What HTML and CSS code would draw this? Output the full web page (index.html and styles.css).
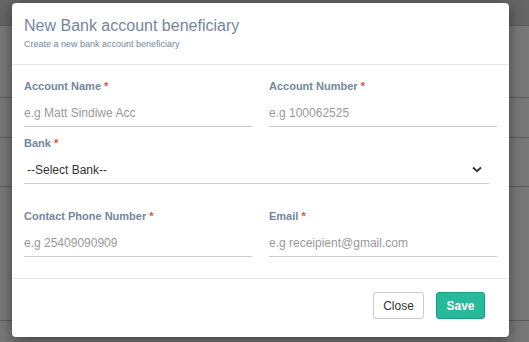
FILE: index.html
```html
<!doctype html>
<html lang="en">
  <head>
    <meta charset="UTF-8" />
    <meta name="viewport" content="width=device-width, initial-scale=1.0" />
    <title>New Bank account beneficiary</title>
    <link rel="stylesheet" href="styles.css">
  </head>
  <body>
    <div class="page">
      <div class="page-row row-top"></div>
      <div class="page-row row-a"></div>
      <div class="page-row row-b"></div>
      <div class="page-row row-c"></div>
      <div class="page-row row-d"></div>
      <div class="page-row row-e"></div>
    </div>

    <div class="modal">
      <div class="modal-header">
        <h4 class="modal-title">New Bank account beneficiary</h4>
        <small class="modal-sub">Create a new bank account beneficiary</small>
      </div>

      <form class="modal-body">
        <div class="form-group">
          <label for="acc_name">Account Name <span class="req">*</span></label>
          <input type="text" id="acc_name" placeholder="e.g Matt Sindiwe Acc" />
        </div>
        <div class="form-group">
          <label for="acc_number">Account Number <span class="req">*</span></label>
          <input type="text" id="acc_number" placeholder="e.g 100062525" />
        </div>

        <div class="form-group wide">
          <label for="bank">Bank <span class="req">*</span></label>
          <div class="select">
            <span>--Select Bank--</span>
            <svg width="10" height="7" viewBox="0 0 10 7">
              <path d="M1 1.5 L5 5.2 L9 1.5" fill="none" stroke="#333" stroke-width="1.8" />
            </svg>
          </div>
        </div>

        <div class="form-group">
          <label for="phone">Contact Phone Number <span class="req">*</span></label>
          <input type="text" id="phone" placeholder="e.g 25409090909" />
        </div>
        <div class="form-group">
          <label for="email">Email <span class="req">*</span></label>
          <input type="text" id="email" placeholder="e.g receipient@gmail.com" />
        </div>
      </form>

      <div class="modal-footer">
        <button type="button" class="btn btn-default">Close</button>
        <button type="button" class="btn btn-success">Save</button>
      </div>
    </div>
  </body>
</html>
```

FILE: styles.css
```css
body {
  margin: 0;
  font-family: "Liberation Sans", Arial, sans-serif;
  background-color: #787878;
  overflow: hidden;
}
.page {
  height: 342px;
}
.page-row {
  border-bottom: 1px solid #5c5c5c;
  box-sizing: border-box;
}
.row-top {
  height: 26px;
  background-color: #656565;
}
.row-a {
  height: 72px;
}
.row-b {
  height: 40px;
}
.row-c {
  height: 49px;
}
.row-d {
  height: 134px;
}
.row-e {
  border-bottom: none;
}

.modal {
  position: absolute;
  left: 12px;
  top: 3px;
  width: 497px;
  height: 334px;
  background: #fff;
  border-radius: 4px;
  box-shadow: 0 4px 14px rgba(0, 0, 0, 0.45);
  display: flex;
  flex-direction: column;
}
.modal-header {
  height: 62px;
  flex-shrink: 0;
  box-sizing: border-box;
  padding: 14px 12px 0;
  border-bottom: 1px solid #e5e5e5;
  color: #73879c;
}
.modal-title {
  margin: 0;
  font-size: 16px;
  font-weight: normal;
  line-height: 18px;
}
.modal-sub {
  display: block;
  margin-top: 4px;
  font-size: 9px;
  line-height: 11px;
}

.modal-body {
  margin: 0;
  flex: 1;
  padding: 14px 12px 0;
  display: grid;
  grid-template-columns: 1fr 1fr;
  column-gap: 17px;
  row-gap: 9px;
  align-content: start;
}
.form-group.wide {
  grid-column: 1 / 3;
  margin-right: 8px;
  margin-bottom: 16px;
}
label {
  display: block;
  font-size: 11px;
  font-weight: bold;
  line-height: 14px;
  color: #73879c;
  margin-bottom: 4px;
}
.req {
  color: #e74c3c;
}
input[type="text"] {
  display: block;
  width: 100%;
  box-sizing: border-box;
  height: 30px;
  padding: 2px 0 0;
  border: none;
  border-bottom: 1px solid #ccc;
  font-family: inherit;
  font-size: 12px;
  color: #555;
  outline: none;
}
input::placeholder {
  color: #999;
}
.select {
  height: 30px;
  box-sizing: border-box;
  padding: 2px 7px 0 3px;
  border-bottom: 1px solid #ccc;
  display: flex;
  align-items: center;
  justify-content: space-between;
  font-size: 12px;
  color: #333;
}

.modal-footer {
  height: 59px;
  flex-shrink: 0;
  box-sizing: border-box;
  border-top: 1px solid #e5e5e5;
  padding: 13px 24px 0;
  display: flex;
  justify-content: flex-end;
  align-items: flex-start;
  gap: 12px;
}
.btn {
  height: 27px;
  border-radius: 3px;
  font-family: inherit;
  font-size: 12px;
  cursor: pointer;
}
.btn-default {
  width: 51px;
  padding: 0;
  background: #fff;
  border: 1px solid #ccc;
  color: #333;
}
.btn-success {
  width: 49px;
  padding: 0;
  background: #26b99a;
  border: 1px solid #169f85;
  color: #fff;
  font-weight: bold;
}
```
